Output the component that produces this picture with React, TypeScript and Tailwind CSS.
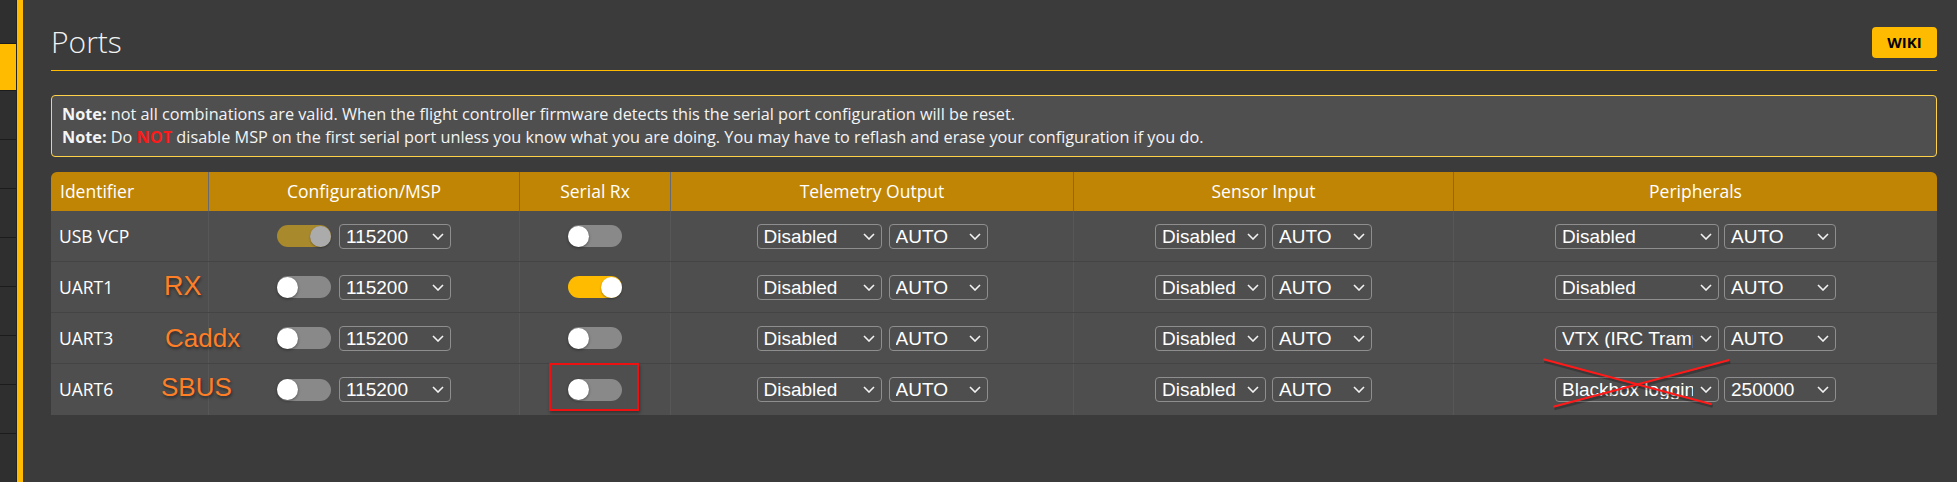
import React from "react";

type ToggleState = "off" | "on" | "dimOn";

function Toggle({ state }: { state: ToggleState }) {
  if (state === "on") {
    return (
      <div className="w-[54px] h-[22px] rounded-full bg-[#ffbb00] flex items-center justify-end shrink-0">
        <div className="w-[21px] h-[21px] rounded-full bg-white shadow-[0_1px_2px_rgba(0,0,0,0.35)]" />
      </div>
    );
  }
  if (state === "dimOn") {
    return (
      <div className="w-[54px] h-[22px] rounded-full bg-[#a8892c] flex items-center justify-end shrink-0">
        <div className="w-[21px] h-[21px] rounded-full bg-[#ababab] shadow-[0_1px_2px_rgba(0,0,0,0.3)]" />
      </div>
    );
  }
  return (
    <div className="w-[54px] h-[22px] rounded-full bg-[#898989] flex items-center justify-start shrink-0">
      <div className="w-[21px] h-[21px] rounded-full bg-white shadow-[0_1px_3px_rgba(0,0,0,0.4)]" />
    </div>
  );
}

function Chevron() {
  return (
    <svg width="12" height="7" viewBox="0 0 12 7" className="shrink-0">
      <polyline points="1,1 6,6 11,1" fill="none" stroke="#f2f2f2" strokeWidth="1.6" />
    </svg>
  );
}

function Select({ value, w }: { value: string; w: string }) {
  return (
    <div
      className={`${w} h-[25px] flex items-center border border-[#8e8e8e] rounded-[4px] pl-[6px] pr-[6px] gap-[7px] shrink-0`}
    >
      <span className="flex-1 min-w-0 overflow-hidden whitespace-nowrap text-white text-[19px] leading-none font-['Liberation_Sans',Arial,sans-serif]">
        {value}
      </span>
      <Chevron />
    </div>
  );
}

type Row = {
  id: string;
  cfg: ToggleState;
  rx: ToggleState;
  periph: string;
  periphBaud: string;
};

const rows: Row[] = [
  { id: "USB VCP", cfg: "dimOn", rx: "off", periph: "Disabled", periphBaud: "AUTO" },
  { id: "UART1", cfg: "off", rx: "on", periph: "Disabled", periphBaud: "AUTO" },
  { id: "UART3", cfg: "off", rx: "off", periph: "VTX (IRC Tramp)", periphBaud: "AUTO" },
  { id: "UART6", cfg: "off", rx: "off", periph: "Blackbox logging", periphBaud: "250000" },
];

const sidebarItems = [0, 1, 2, 3, 4, 5, 6, 7, 8];

export default function App() {
  return (
    <div className="relative w-[1957px] h-[482px] overflow-hidden flex bg-[#3a3b3a] font-['Open_Sans',sans-serif]">
      {/* Sidebar */}
      <div className="w-[17px] h-full bg-[#2f2f2f] flex flex-col shrink-0 border-r border-[#232323]">
        <div className="h-[44px] border-b border-[#1c1c1c] shrink-0" />
        <div className="h-[47px] bg-[#ffbb00] border-b border-[#1c1c1c] shrink-0" />
        {sidebarItems.map((i) => (
          <div key={i} className="h-[49px] border-b border-[#1c1c1c] shrink-0" />
        ))}
      </div>
      <div className="w-[6px] h-full bg-[#ffbb00] shrink-0" />

      {/* Main */}
      <div className="flex-1 pl-[28px] pr-[20px]">
        <div className="mt-[20px] h-[44px] flex items-center justify-between">
          <div className="text-[30px] font-light leading-[44px] text-[#f2f2f2]">Ports</div>
          <div className="h-[31px] w-[65px] rounded-[4px] bg-[#ffbb00] text-black font-bold text-[15px] flex items-center justify-center">
            WIKI
          </div>
        </div>
        <div className="mt-[6px] h-px bg-[#ffbb00]" />

        <div className="mt-[24px] border border-[#ffd24a] rounded-[4px] bg-[#4f4f4f] px-[10px] py-[7px] text-[16.25px] leading-[23px] text-[#f4f4f4]">
          <div>
            <b>Note:</b> not all combinations are valid. When the flight controller firmware detects this the serial
            port configuration will be reset.
          </div>
          <div>
            <b>Note:</b> Do <b className="text-[#ff1a1a]">NOT</b> disable MSP on the first serial port unless you know
            what you are doing. You may have to reflash and erase your configuration if you do.
          </div>
        </div>

        {/* Table */}
        <div className="mt-[15px] rounded-t-[6px] overflow-hidden">
          <div className="grid grid-cols-[157px_311px_151px_403px_380px_484px] h-[39px] bg-[#c08505] text-white text-[17.5px]">
            <div className="flex items-center pl-[9px]">Identifier</div>
            <div className="flex items-center justify-center border-l border-[#666a72]">Configuration/MSP</div>
            <div className="flex items-center justify-center border-l border-[#666a72]">Serial Rx</div>
            <div className="flex items-center justify-center border-l border-[#666a72]">Telemetry Output</div>
            <div className="flex items-center justify-center border-l border-[#666a72]">Sensor Input</div>
            <div className="flex items-center justify-center border-l border-[#666a72]">Peripherals</div>
          </div>
          {rows.map((r, idx) => (
            <div
              key={r.id}
              className={`grid grid-cols-[157px_311px_151px_403px_380px_484px] h-[51px] bg-[#4e4e4e] ${
                idx < rows.length - 1 ? "border-b border-[#444444]" : ""
              }`}
            >
              <div className="flex items-center pl-[8px] text-white text-[17.5px]">{r.id}</div>
              <div className="flex items-center justify-center gap-[8px] border-l border-[#575757]">
                <Toggle state={r.cfg} />
                <Select value="115200" w="w-[112px]" />
              </div>
              <div className="flex items-center justify-center border-l border-[#575757]">
                <Toggle state={r.rx} />
              </div>
              <div className="flex items-center justify-center gap-[7px] border-l border-[#575757]">
                <Select value="Disabled" w="w-[125px]" />
                <Select value="AUTO" w="w-[99px]" />
              </div>
              <div className="flex items-center justify-center gap-[6px] border-l border-[#575757]">
                <Select value="Disabled" w="w-[111px]" />
                <Select value="AUTO" w="w-[100px]" />
              </div>
              <div className="flex items-center justify-center gap-[5px] border-l border-[#575757]">
                <Select value={r.periph} w="w-[164px]" />
                <Select value={r.periphBaud} w="w-[112px]" />
              </div>
            </div>
          ))}
        </div>
      </div>

      {/* Annotations drawn over the screenshot */}
      <div className="absolute left-[164px] top-[273px] text-[27px] leading-none text-[#ff7f27] font-['Liberation_Sans',Arial,sans-serif] [text-shadow:1px_2px_3px_rgba(0,0,0,0.45)]">
        RX
      </div>
      <div className="absolute left-[165px] top-[325px] text-[26px] leading-none text-[#ff7f27] font-['Liberation_Sans',Arial,sans-serif] [text-shadow:1px_2px_3px_rgba(0,0,0,0.45)]">
        Caddx
      </div>
      <div className="absolute left-[161px] top-[374px] text-[26px] leading-none text-[#ff7f27] font-['Liberation_Sans',Arial,sans-serif] [text-shadow:1px_2px_3px_rgba(0,0,0,0.45)]">
        SBUS
      </div>
      <div className="absolute left-[549px] top-[363px] w-[90px] h-[48px] border-2 border-[#ee1111] shadow-[1px_2px_3px_rgba(0,0,0,0.35)]" />
      <svg className="absolute left-[1530px] top-[350px]" width="210" height="70" viewBox="0 0 210 70">
        <line x1="13.3" y1="9.3" x2="181.7" y2="54.3" stroke="rgba(0,0,0,0.25)" strokeWidth="3" transform="translate(1,2)" />
        <line x1="23.3" y1="56.7" x2="199.3" y2="10" stroke="rgba(0,0,0,0.25)" strokeWidth="3" transform="translate(1,2)" />
        <line x1="13.3" y1="9.3" x2="181.7" y2="54.3" stroke="#ff1a1a" strokeWidth="2" />
        <line x1="23.3" y1="56.7" x2="199.3" y2="10" stroke="#ff1a1a" strokeWidth="2" />
      </svg>
    </div>
  );
}
